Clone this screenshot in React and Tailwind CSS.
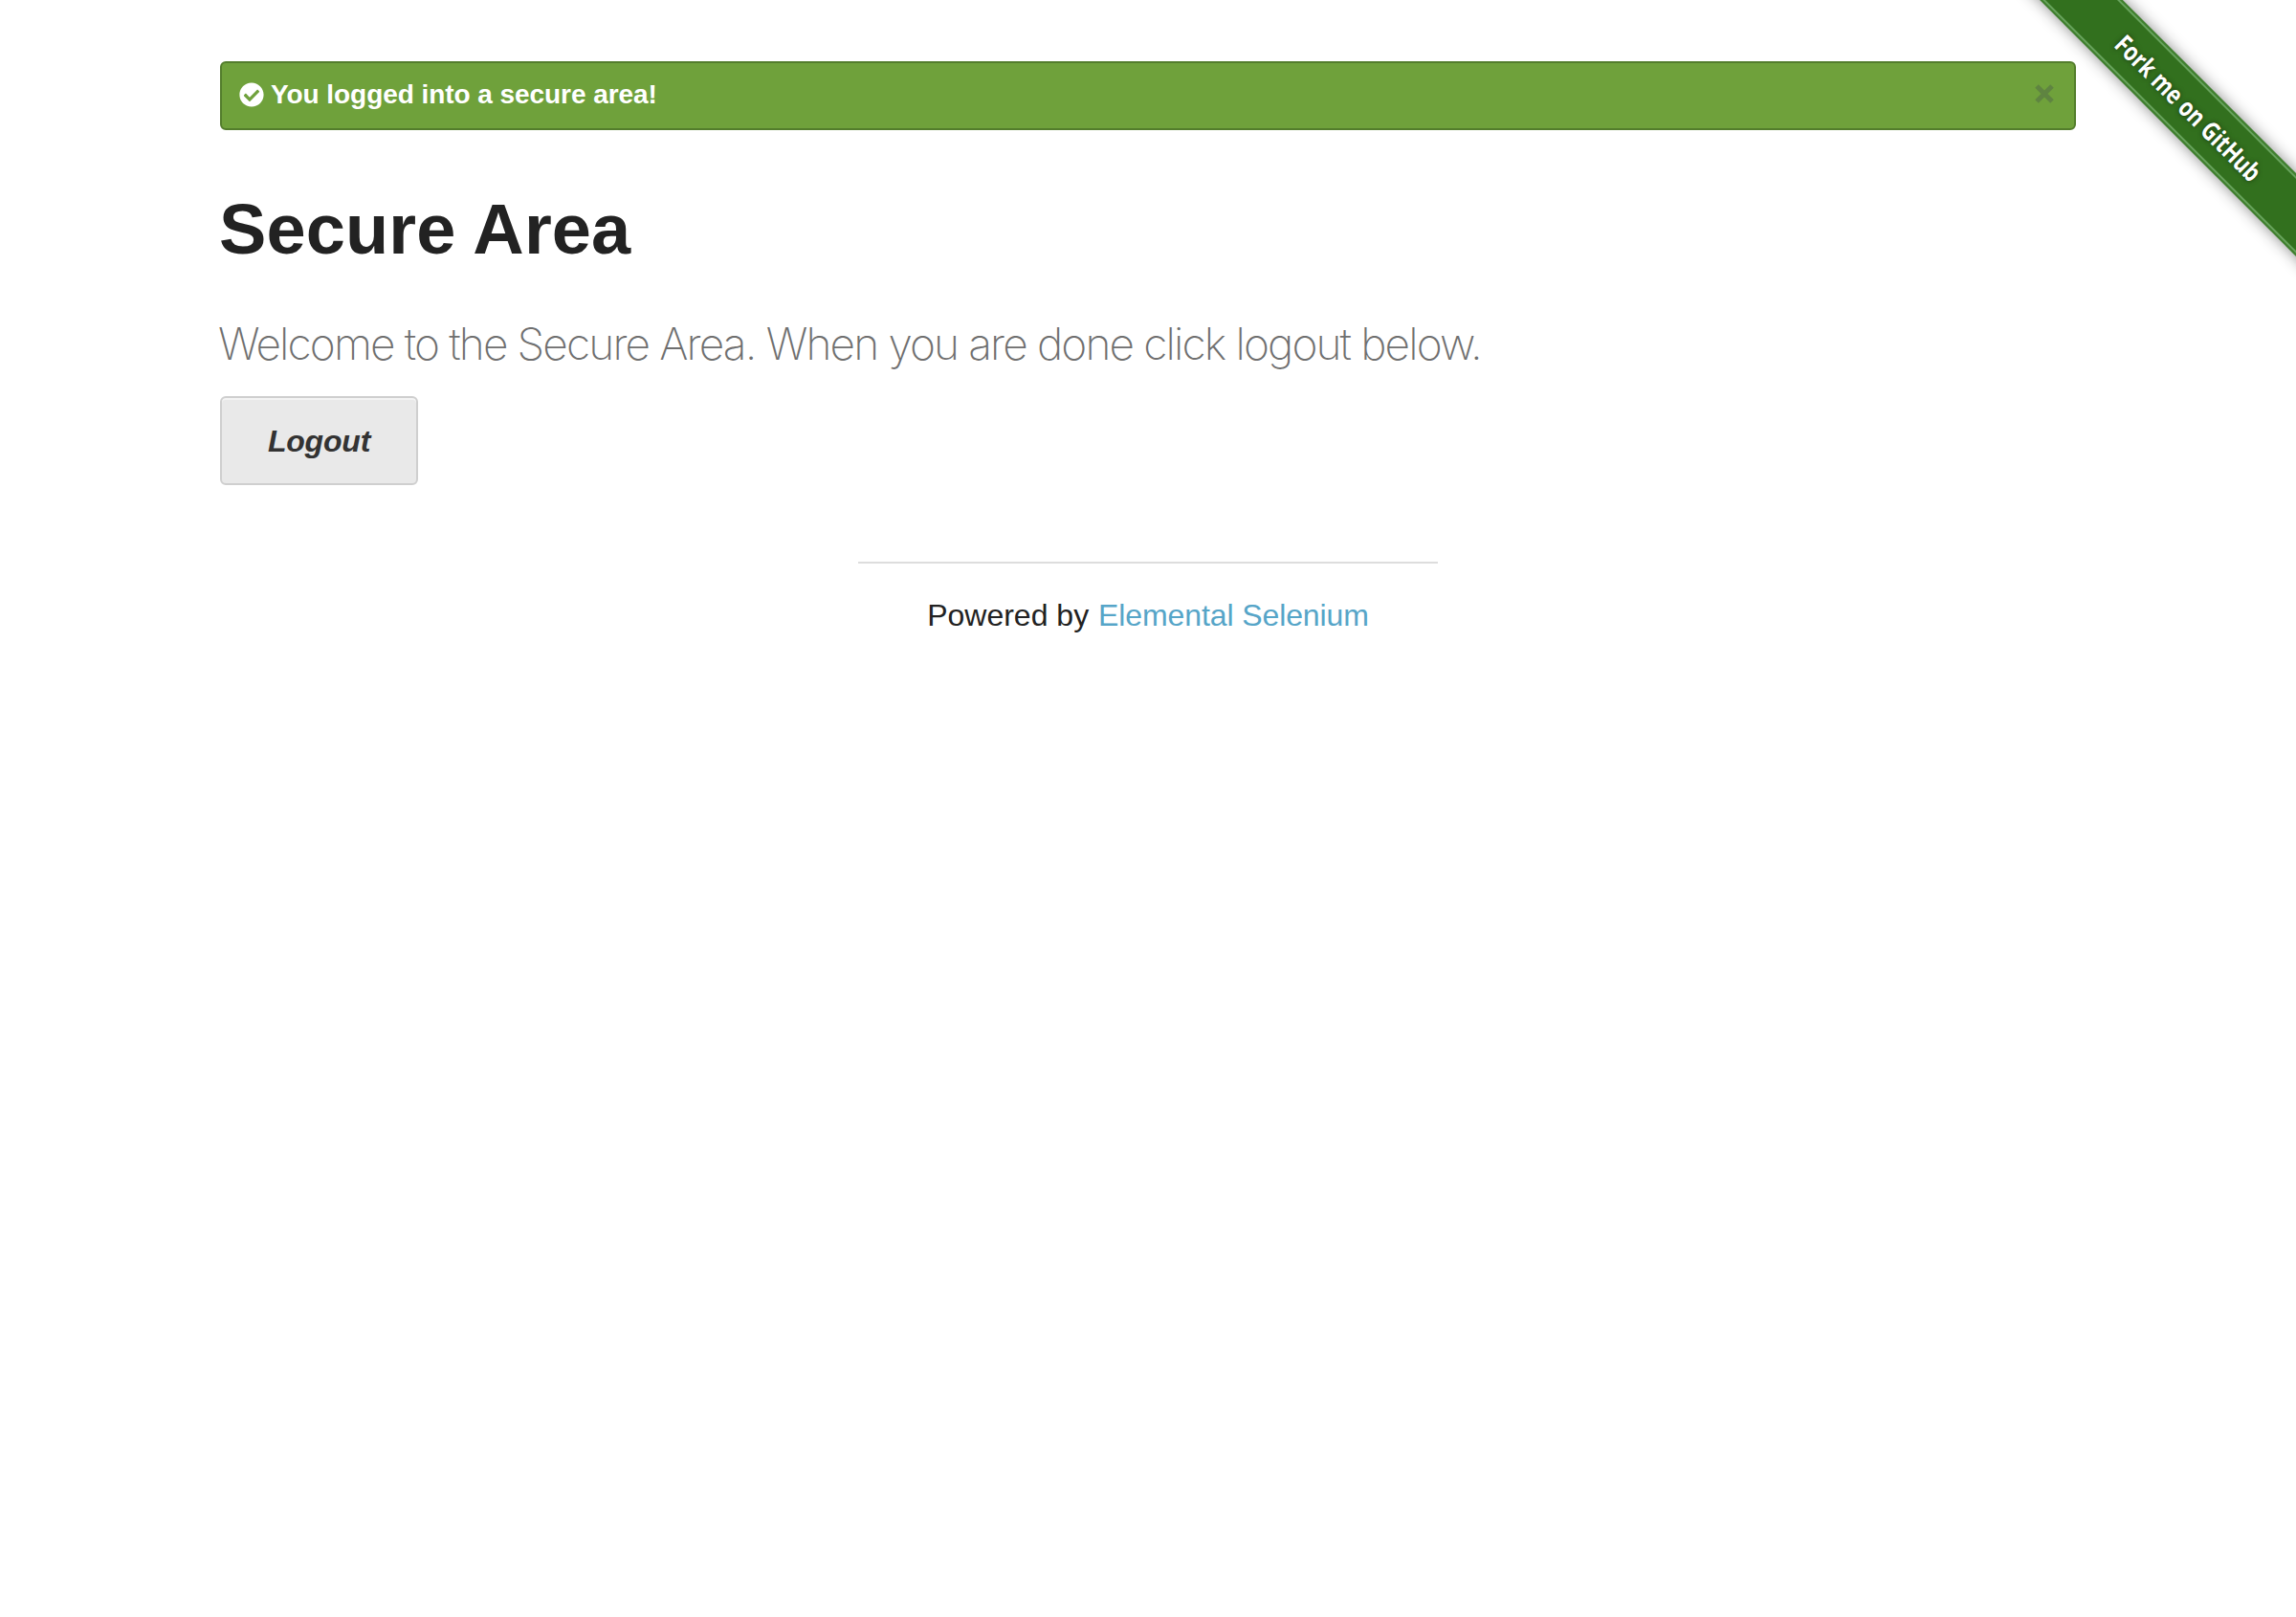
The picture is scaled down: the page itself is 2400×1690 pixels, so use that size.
import React from "react";
import { FaCheckCircle } from "react-icons/fa";

function Ribbon() {
  return (
    <a href="#" className="absolute top-0 right-0 block h-[298px] w-[298px] overflow-hidden">
      <span className="absolute top-[82px] left-[-64px] flex h-[61px] w-[500px] rotate-45 flex-col justify-between border-y-2 border-[#40802f] bg-[#32701e] shadow-[0_0_16px_rgba(0,0,0,0.45)]">
        <span className="block border-t-2 border-[#68a35d]" />
        <span className="scale-x-[0.8] text-center font-['Open_Sans',sans-serif] text-[27px] leading-[40px] font-bold whitespace-nowrap text-white [text-shadow:0_0_6px_rgba(0,0,0,0.5)]">
          Fork me on GitHub
        </span>
        <span className="block border-t-2 border-[#68a35d]" />
      </span>
    </a>
  );
}

export default function App() {
  return (
    <div className="relative min-h-[1690px] w-full overflow-hidden bg-white font-['Liberation_Sans',Arial,sans-serif] text-[#222222]">
      <div className="mx-[230px] pt-16">
        <div className="flex h-[72px] items-start justify-between rounded-[6px] border-2 border-[#537d2c] bg-[#6fa13b] pt-[19px] pr-[21px] pl-[18px] text-white">
          <div className="flex items-center">
            <FaCheckCircle className="h-[26px] w-[26px]" />
            <span className="ml-[7px] text-[28px] leading-[28px] font-bold tracking-[-0.06px]">You logged into a secure area!</span>
          </div>
          <svg viewBox="0 0 20 20" className="mt-[3px] h-5 w-5" stroke="#5f8441" strokeWidth="5">
            <path d="M2 2 18 18M18 2 2 18" />
          </svg>
        </div>
        <h2 className="mt-[52px] -ml-px text-[74px] leading-[104px] font-bold tracking-[0.1px]">Secure Area</h2>
        <h4 className="mt-[35px] -ml-[2px] font-['Inter','Liberation_Sans',sans-serif] text-[46px] leading-[64px] font-extralight tracking-[-1.85px] whitespace-nowrap text-[#6f6f6f]">
          Welcome to the Secure Area. When you are done click logout below.
        </h4>
        <a href="#" className="mt-[23px] flex h-[93px] w-[207px] items-center justify-center rounded-[6px] border-2 border-[#cfcfcf] bg-[#e9e9e9] text-[32px] leading-8 font-bold tracking-[-0.2px] text-[#333333] italic shadow-[inset_0_2px_0_rgba(255,255,255,0.5)]">
          Logout
        </a>
      </div>
      <footer className="mx-auto mt-20 w-[606px] border-t-2 border-[#dddddd] pt-[29px] text-center text-[32px] leading-[51px]">
        Powered by <a href="#" className="ml-px tracking-[-0.1px] text-[#56a5c8]">Elemental Selenium</a>
      </footer>
      <Ribbon />
    </div>
  );
}
